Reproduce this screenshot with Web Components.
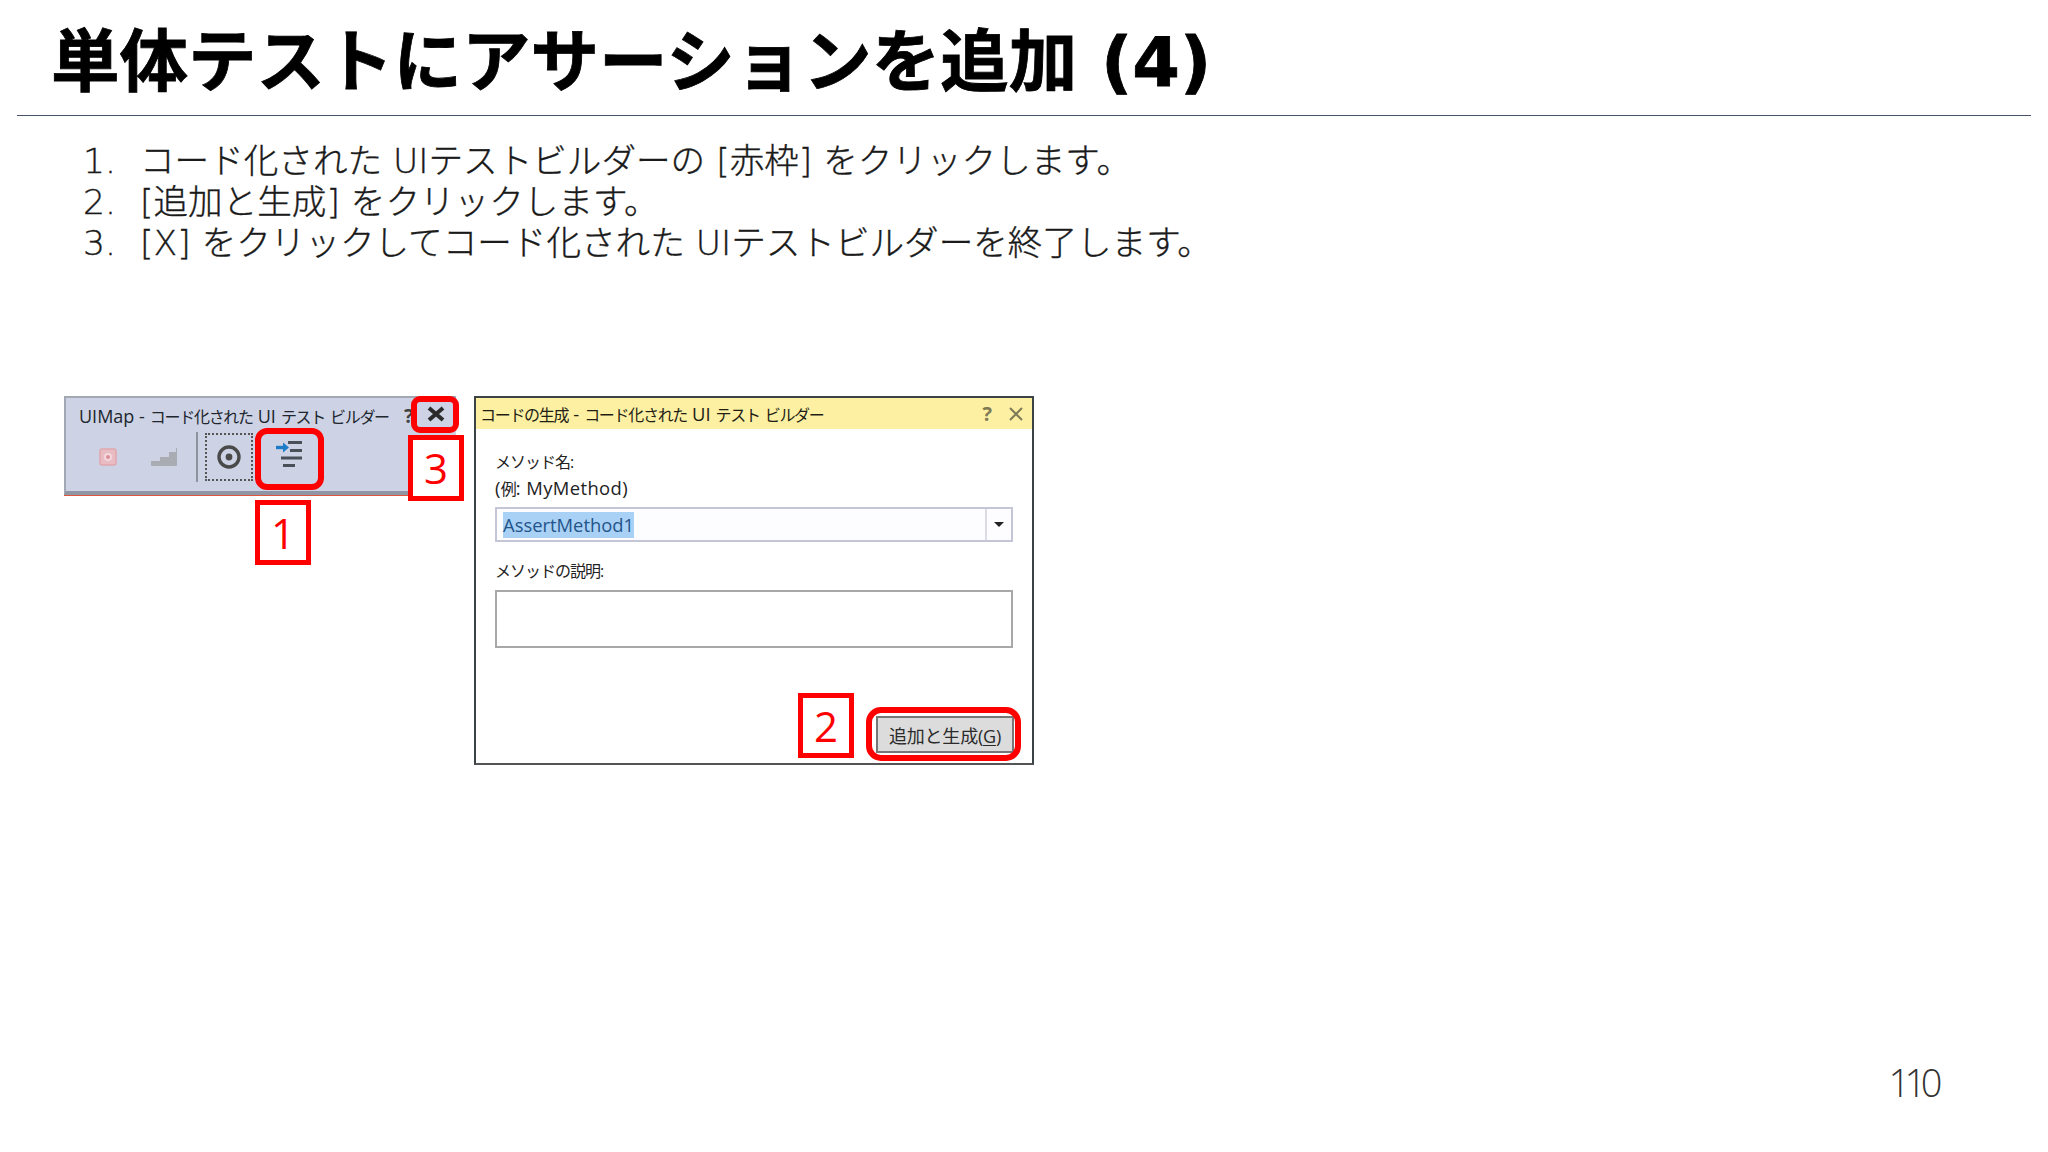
<!DOCTYPE html>
<html lang="ja"><head><meta charset="utf-8"><title>単体テストにアサーションを追加 (4)</title>
<style>html,body{margin:0;background:#fff}body{font-family:"Open Sans","Noto Sans CJK JP",sans-serif}</style>
</head><body>
<x-slide>
  <x-heading slot="head">単体テストにアサーションを追加 (4)</x-heading>
  <x-steps slot="steps">
    <x-step n="1.">コード化された UIテストビルダーの [赤枠] をクリックします。</x-step>
    <x-step n="2.">[追加と生成] をクリックします。</x-step>
    <x-step n="3.">[X] をクリックしてコード化された UIテストビルダーを終了します。</x-step>
  </x-steps>
  <x-figure slot="figure">
    <x-toolbar></x-toolbar>
    <x-dialog></x-dialog>
  </x-figure>
  <span slot="page">110</span>
</x-slide>
<script>
function def(name, css, html, init){
  customElements.define(name, class extends HTMLElement{
    constructor(){super();this.attachShadow({mode:'open'}).innerHTML='<style>'+css+'</style>'+html;}
    connectedCallback(){if(init)init(this);}
  });
}
const F='"Open Sans","Noto Sans CJK JP",sans-serif';
def('x-slide',`
  :host{display:flex;flex-direction:column;width:2048px;height:1152px;box-sizing:border-box;padding:0 17px;overflow:hidden;color:#262626;font-family:${F}}
  .steps{margin-top:25px}
  .fig{margin-top:132px}
  .page{margin-top:auto;align-self:flex-end;margin-right:94px;margin-bottom:51px;font:300 38px/1 "Open Sans",sans-serif;letter-spacing:-5.500px;color:#333}
`,`<slot name="head"></slot><div class="steps"><slot name="steps"></slot></div><div class="fig"><slot name="figure"></slot></div><div class="page"><slot name="page"></slot></div>`);
def('x-heading',`
  :host{display:block;height:115px;border-bottom:1px solid #44546a;padding-left:34px}
  div{font:700 68.500px/124px "DejaVu Sans","Noto Sans CJK JP",sans-serif;color:#000;white-space:nowrap;-webkit-text-stroke:.8px #000}
`,`<div><slot></slot></div>`);
def('x-steps',`
  :host{display:block;padding-left:66px;font:300 34.600px/41px "DejaVu Sans","Noto Sans CJK JP",sans-serif;color:#1a1a1a;-webkit-text-stroke:.35px #1a1a1a}
`,`<slot></slot>`);
def('x-step',`
  :host{display:flex;white-space:nowrap}
  .n{flex:none;width:57px}
`,`<span class="n"></span><span><slot></slot></span>`,el=>{el.shadowRoot.querySelector('.n').textContent=el.getAttribute('n')});
def('x-figure',`
  :host{display:flex;align-items:flex-start;gap:18px;margin-left:47px;position:relative}
`,`<slot></slot>`);
def('x-callout',`
  :host{position:absolute;display:flex;align-items:center;justify-content:center;box-sizing:border-box;border:5px solid #f00;background:#fff;color:#f00;font:400 42px/1 "Open Sans",sans-serif}
`,`<slot></slot>`);
def('x-ring',`
  :host{position:absolute;box-sizing:border-box;border:6px solid #f00;border-radius:12px}
`,``);
def('x-toolbar',`
  :host{display:block;position:relative;width:392px;height:99px;box-sizing:border-box;background:#cdd3e4;border-top:2px solid #a2a8b4;border-left:2px solid #a2a8b4;border-bottom:4px solid #8f95a5;box-shadow:0 1px 0 #e0563c;font-family:${F}}
  .title{display:flex;align-items:center;gap:5px;height:35px;padding-left:13px;font-size:18px;color:#20252e;white-space:nowrap}
  .j{font-size:16px;letter-spacing:-1.3px}
  .q{position:absolute;left:338px;top:6px;font:700 20px/24px "Open Sans",sans-serif;color:#444}
  .x{position:absolute;left:360px;top:8px}
  .tools{display:flex;align-items:center;height:48px;padding-left:33px}
  .tools svg{display:block}
  .sep{flex:none;width:2px;height:50px;background:#8e93a0;margin:0 7px 0 17px}
  .focus{flex:none;display:flex;align-items:center;justify-content:center;width:48px;height:48px;box-sizing:border-box;border:2px dotted #555}
  .assert{margin-left:23px;margin-top:-4px}
  .ring1{left:189px;top:30px;width:69px;height:62px}
  .ring3{left:345px;top:-2px;width:48px;height:37px;border-radius:9px}
  .c1{left:189px;top:102px;width:56px;height:65px}
  .c3{left:342px;top:37px;width:56px;height:66px}
`,`<div class="title"><span>UIMap -</span><span class="j">コード化された</span><span>UI</span><span class="j">テスト</span><span class="j">ビルダー</span></div>
<span class="q">?</span>
<svg class="x" width="20" height="16" viewBox="0 0 20 16"><path d="M3 2 L17 14 M17 2 L3 14" stroke="#2b2b2b" stroke-width="4"/></svg>
<div class="tools">
  <svg width="18" height="18" viewBox="0 0 18 18"><rect x="1" y="1" width="16" height="16" rx="2" fill="#e9bcc4" stroke="#dfa6ae" stroke-width="1.5"/><rect x="5" y="5" width="8" height="8" rx="4" fill="#f2d9de"/><circle cx="9" cy="9" r="2" fill="#e08c98"/></svg>
  <svg style="margin-left:34px" width="28" height="18" viewBox="0 0 28 18"><path d="M0 13h9V9h9V4h7V0h1v18H0z" fill="#a9acb3"/></svg>
  <span class="sep"></span>
  <span class="focus"><svg width="26" height="26" viewBox="0 0 26 26"><circle cx="13" cy="13" r="10" fill="none" stroke="#4a4a4a" stroke-width="3.4"/><circle cx="13" cy="13" r="3.4" fill="#4a4a4a"/></svg></span>
  <svg class="assert" width="28" height="30" viewBox="0 0 28 30"><path d="M0 7.500h8" stroke="#1c7cc8" stroke-width="3.400"/><path d="M7 2.500l6 5-6 5z" fill="#1c7cc8"/><path d="M12 2.500h14M14 10.500h12M5 18h21M7 25.500h12" stroke="#4b4f57" stroke-width="3"/></svg>
</div>
<x-ring class="ring1"></x-ring>
<x-ring class="ring3"></x-ring>
<x-callout class="c1">1</x-callout>
<x-callout class="c3">3</x-callout>`);
def('x-dialog',`
  :host{display:flex;flex-direction:column;position:relative;width:560px;height:369px;box-sizing:border-box;background:#fff;border:2px solid #3b4347;border-bottom-color:#555;font-family:${F};color:#222;font-size:18.400px}
  .j{font-size:16px;letter-spacing:-1.3px}
  .bar{display:flex;align-items:center;gap:5px;height:31px;padding:0 8px 0 4px;background:#fdf0a3;color:#1f1f16;white-space:nowrap;flex:none}
  .sp{flex:1}
  .q{font:700 20px/1 "Open Sans",sans-serif;color:#7d7a55;margin-right:11px}
  .body{display:flex;flex-direction:column;padding:19px 19px 0;flex:1}
  .lab{line-height:26px;letter-spacing:.4px}
  .lab .j{letter-spacing:-1px}
  .combo{display:flex;align-items:center;height:35px;box-sizing:border-box;border:2px solid #c5c5d8;margin-top:5px;padding-left:6px;background:#fdfdff}
  .sel{background:#a9d1f5;color:#23548a;line-height:26px;flex:none}
  .arrow{width:24px;height:100%;border-left:2px solid #dcdce6;display:flex;align-items:center;justify-content:center}
  .arrow i{display:block;width:0;height:0;border:5px solid transparent;border-top:5px solid #222;border-bottom:0}
  .lab2{margin-top:15px}
  .ta{height:58px;box-sizing:border-box;border:2px solid #a8a8a8;margin-top:6px}
  .foot{display:flex;justify-content:flex-end;margin-top:auto;margin-bottom:10px}
  .btn{display:flex;align-items:center;justify-content:center;width:138px;height:37px;box-sizing:border-box;margin-right:-1px;background:#dcdcdc;border:2px solid #777;color:#2b2b2b;font-size:18px;letter-spacing:-.2px}
  u{text-underline-offset:2px}
  .ring2{right:11px;bottom:2px;width:155px;height:54px;border-radius:15px}
  .c2{left:322px;top:295px;width:56px;height:65px}
`,`<div class="bar"><span class="j">コードの生成</span><span>-</span><span class="j">コード化された</span><span>UI</span><span class="j">テスト</span><span class="j">ビルダー</span><span class="sp"></span><span class="q">?</span><svg width="16" height="16" viewBox="0 0 16 16"><path d="M2 2L14 14M14 2L2 14" stroke="#7d7a55" stroke-width="2"/></svg></div>
<div class="body">
  <div class="lab"><span class="j">メソッド名:</span><br>(<span class="j">例</span>: MyMethod)</div>
  <div class="combo"><span class="sel">AssertMethod1</span><span class="sp"></span><span class="arrow"><i></i></span></div>
  <div class="lab lab2"><span class="j">メソッドの説明:</span></div>
  <div class="ta"></div>
  <div class="foot"><div class="btn"><span>追加と生成(<u>G</u>)</span></div></div>
</div>
<x-ring class="ring2"></x-ring>
<x-callout class="c2">2</x-callout>`);
</script>
</body></html>
